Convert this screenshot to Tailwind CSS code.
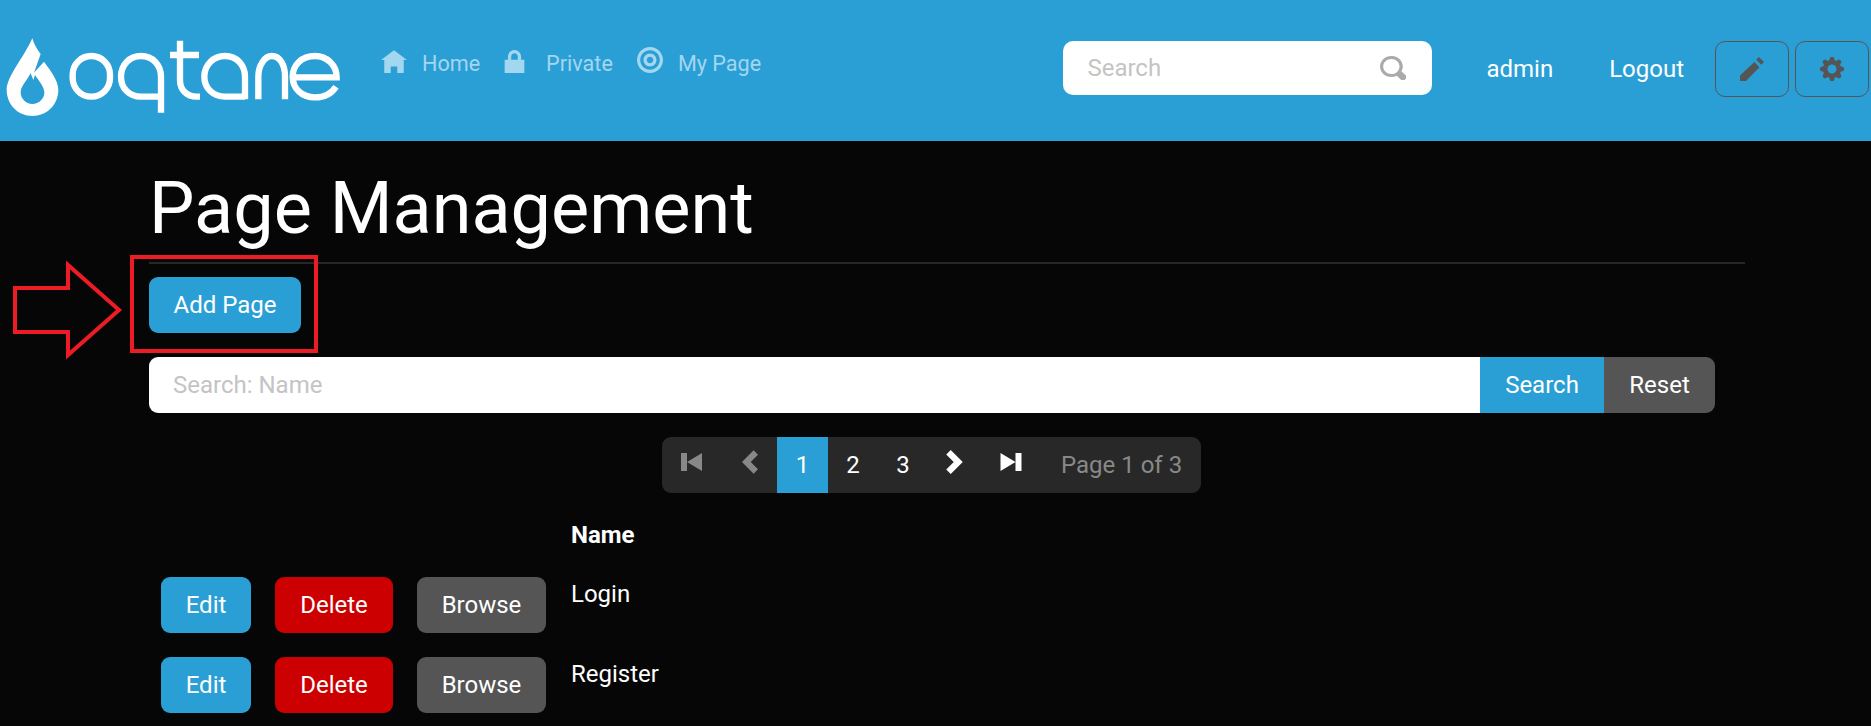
<!DOCTYPE html>
<html>
<head>
<meta charset="utf-8">
<script src="https://cdn.jsdelivr.net/npm/@tailwindcss/browser@4"></script>
</head>
<body class="relative h-[726px] overflow-hidden bg-[#060606] font-['Roboto',sans-serif] text-[24px] text-white">
<header class="flex h-[141px] bg-[#2a9fd6]">
  <svg class="mt-[30px] h-[95px] w-[350px] shrink-0" viewBox="0 0 1050 285">
    <path fill="#fff" fill-rule="evenodd" d="M97 25C103 45 112 60 122 72L102 128L132 95C150 120 175 150 175 180C175 224 140 258 97 258C55 258 20 224 20 180C20 140 70 85 97 25ZM92 130C78 155 62 170 62 187C62 207 78 222 97 222C117 222 133 207 133 187C133 170 115 150 105 135L100 150Z"/>
    <g fill="none" stroke="#fff" stroke-width="19">
      <rect x="218" y="78" width="112" height="122" rx="56"/>
      <path d="M483 248V140C483 105 458 78 423 78C388 78 363 105 363 140C363 175 388 200 423 200H483"/>
      <path d="M540 32V150C540 180 560 200 590 200H600M510 75H597"/>
      <path d="M735 208V140C735 105 710 78 675 78C640 78 613 105 613 140C613 175 640 200 675 200H735"/>
      <path d="M775 208V140C775 105 795 78 815 78C840 78 855 105 855 140V208"/>
      <path d="M880 142H1010C1010 105 980 78 945 78C905 78 878 105 878 140C878 175 905 202 945 202C975 202 995 190 1008 170"/>
    </g>
  </svg>
  <nav class="ml-[31px] flex h-[126px] items-start pt-[47px] text-[21.6px] text-[#a3d6ef]">
    <svg class="mt-[3px] h-[23px] w-[26px]" viewBox="0 0 8 7" fill="#a3d6ef"><path d="M4 0l-4 3h1v4h2v-2h2v2h2v-4.03l1 .03-4-3z"/></svg>
    <span class="ml-[15px] leading-[34px]">Home</span>
    <svg class="ml-[24px] mt-[3px] h-[23px] w-[21px]" viewBox="0 0 6 7" fill="#a3d6ef"><path d="M3 0c-1.1 0-2 .9-2 2v1h-1v4h6v-4h-1v-1c0-1.1-.9-2-2-2zm0 1c.56 0 1 .44 1 1v1h-2v-1c0-.56.44-1 1-1z"/></svg>
    <span class="ml-[21px] leading-[34px]">Private</span>
    <svg class="ml-[24px] h-[26px] w-[26px]" viewBox="0 0 8 8" fill="#a3d6ef"><path d="M4 0c-2.2 0-4 1.8-4 4s1.8 4 4 4 4-1.8 4-4-1.8-4-4-4zm0 1c1.66 0 3 1.34 3 3s-1.34 3-3 3-3-1.34-3-3 1.34-3 3-3zm0 1c-1.1 0-2 .9-2 2s.9 2 2 2 2-.9 2-2-.9-2-2-2zm0 1c.56 0 1 .44 1 1s-.44 1-1 1-1-.44-1-1 .44-1 1-1z"/></svg>
    <span class="ml-[15px] leading-[34px]">My Page</span>
  </nav>
  <div class="ml-auto flex items-start pr-[2px] pt-[41px]">
    <div class="flex h-[54px] w-[369px] items-center justify-between rounded-[10px] bg-white pl-[24px] pr-[26px] text-[#c4c4c4]">
      <span>Search</span>
      <svg class="h-[24px] w-[26px]" viewBox="0 0 8 8" fill="#aaaaaa" preserveAspectRatio="none"><path d="M3.5 0c-1.93 0-3.5 1.57-3.5 3.5s1.57 3.5 3.5 3.5c.59 0 1.17-.14 1.66-.41a1 1 0 0 0 .13.13l1 1a1.02 1.02 0 1 0 1.44-1.44l-1-1a1 1 0 0 0-.16-.13c.27-.49.44-1.06.44-1.66 0-1.93-1.57-3.5-3.5-3.5zm0 1c1.39 0 2.5 1.11 2.5 2.5 0 .66-.24 1.27-.66 1.72-.01.01-.02.02-.03.03a1 1 0 0 0-.13.13c-.44.4-1.04.63-1.69.63-1.39 0-2.5-1.11-2.5-2.5s1.11-2.5 2.5-2.5z"/></svg>
    </div>
    <span class="ml-[54px] leading-[56px]">admin</span>
    <span class="ml-[56px] leading-[56px]">Logout</span>
    <div class="ml-[31px] flex h-[56px] w-[74px] items-center justify-center rounded-[10px] border border-[#555]">
      <svg class="h-[24px] w-[24px]" viewBox="0 0 8 8" fill="#555"><path d="M6.3 0l-.9.9 1.7 1.7.9-.9zM4.8 1.7L0 6.2V8h2l4.5-4.6z"/></svg>
    </div>
    <div class="ml-[6px] flex h-[56px] w-[74px] items-center justify-center rounded-[10px] border border-[#555]">
      <svg class="h-[24px] w-[24px]" viewBox="0 0 8 8" fill="#555"><path d="M3.5 0l-.5 1.19c-.1.03-.19.08-.28.13l-1.19-.5-.72.72.5 1.19c-.05.1-.09.18-.13.28l-1.19.5v1l1.19.5c.04.1.08.18.13.28l-.5 1.19.72.72 1.19-.5c.09.04.18.09.28.13l.5 1.19h1l.5-1.19c.09-.04.19-.08.28-.13l1.19.5.72-.72-.5-1.19c.04-.09.09-.19.13-.28l1.19-.5v-1l-1.19-.5c-.03-.09-.08-.19-.13-.28l.5-1.19-.72-.72-1.19.5c-.09-.04-.19-.09-.28-.13l-.5-1.19h-1zm.5 2.5c.83 0 1.5.67 1.5 1.5s-.67 1.5-1.5 1.5-1.5-.67-1.5-1.5.67-1.5 1.5-1.5z"/></svg>
    </div>
  </div>
</header>
<main class="pl-[149px]">
  <h1 class="h-[123px] w-[1596px] border-b-2 border-[#282828] pt-[25px] text-[72px] leading-[86px]">Page Management</h1>
  <div class="mt-[13px] flex h-[56px] w-[152px] items-center justify-center rounded-[9px] bg-[#2a9fd6]">Add Page</div>
  <div class="mt-[24px] flex h-[56px] w-[1566px]">
    <div class="flex flex-1 items-center rounded-l-[9px] bg-white pl-[24px] text-[#c4c4c4]">Search: Name</div>
    <div class="flex w-[124px] items-center justify-center bg-[#2a9fd6]">Search</div>
    <div class="flex w-[111px] items-center justify-center rounded-r-[9px] bg-[#555]">Reset</div>
  </div>
  <div class="ml-[513px] mt-[24px] flex h-[56px] w-[539px] items-center rounded-[9px] bg-[#282828]">
    <svg class="-mt-[6px] ml-[19px] h-[18px] w-[21px]" viewBox="0 0 7 6" fill="#888"><path d="M0 0v6h2v-6h-2zm2 3l5 3v-6l-5 3z"/></svg>
    <svg class="-mt-[6px] ml-[40px] h-[24px] w-[16px]" viewBox="0 0 5.5 8" fill="#888"><path d="M4 0l-4 4 4 4 1.5-1.5-2.5-2.5 2.5-2.5-1.5-1.5z"/></svg>
    <div class="ml-[19px] flex h-full w-[51px] items-center justify-center bg-[#2a9fd6]">1</div>
    <div class="flex h-full w-[50px] items-center justify-center">2</div>
    <div class="flex h-full w-[50px] items-center justify-center">3</div>
    <svg class="-mt-[6px] ml-[18px] h-[24px] w-[17px]" viewBox="0 0 5.5 8" fill="#fff"><path d="M1.5 0l-1.5 1.5 2.5 2.5-2.5 2.5 1.5 1.5 4-4-4-4z"/></svg>
    <svg class="-mt-[6px] ml-[37px] h-[18px] w-[22px]" viewBox="0 0 7 6" fill="#fff"><path d="M0 0v6l5-3-5-3zm5 3v3h2v-6h-2v3z"/></svg>
    <span class="ml-[39px] text-[#888]">Page 1 of 3</span>
  </div>
  <div class="ml-[422px] mt-[25px] font-bold leading-[34px]">Name</div>
  <div class="mt-[25px] flex flex-col gap-[24px] pl-[12px]">
    <div class="flex h-[56px] items-start">
      <div class="flex h-[56px] w-[90px] items-center justify-center rounded-[9px] bg-[#2a9fd6]">Edit</div>
      <div class="ml-[24px] flex h-[56px] w-[118px] items-center justify-center rounded-[9px] bg-[#c00]">Delete</div>
      <div class="ml-[24px] flex h-[56px] w-[129px] items-center justify-center rounded-[9px] bg-[#555]">Browse</div>
      <span class="ml-[25px] leading-[34px]">Login</span>
    </div>
    <div class="flex h-[56px] items-start">
      <div class="flex h-[56px] w-[90px] items-center justify-center rounded-[9px] bg-[#2a9fd6]">Edit</div>
      <div class="ml-[24px] flex h-[56px] w-[118px] items-center justify-center rounded-[9px] bg-[#c00]">Delete</div>
      <div class="ml-[24px] flex h-[56px] w-[129px] items-center justify-center rounded-[9px] bg-[#555]">Browse</div>
      <span class="ml-[25px] leading-[34px]">Register</span>
    </div>
  </div>
</main>
<div class="absolute left-[130px] top-[255px] h-[98px] w-[188px] border-[4px] border-[#ed1c24]"></div>
<svg class="absolute left-0 top-[255px] h-[110px] w-[130px]" viewBox="0 0 130 110"><path d="M15 33H68V10L119 55L68 100V77H15Z" fill="none" stroke="#ed1c24" stroke-width="4"/></svg>
</body>
</html>
